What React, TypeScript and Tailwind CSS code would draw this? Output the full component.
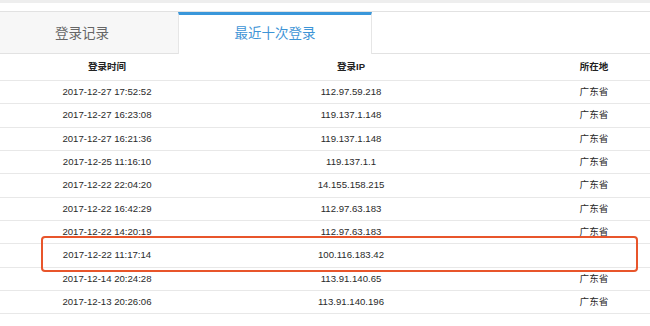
import React from "react";

const rows = [
  { time: "2017-12-27 17:52:52", ip: "112.97.59.218", place: "广东省" },
  { time: "2017-12-27 16:23:08", ip: "119.137.1.148", place: "广东省" },
  { time: "2017-12-27 16:21:36", ip: "119.137.1.148", place: "广东省" },
  { time: "2017-12-25 11:16:10", ip: "119.137.1.1", place: "广东省" },
  { time: "2017-12-22 22:04:20", ip: "14.155.158.215", place: "广东省" },
  { time: "2017-12-22 16:42:29", ip: "112.97.63.183", place: "广东省" },
  { time: "2017-12-22 14:20:19", ip: "112.97.63.183", place: "广东省" },
  { time: "2017-12-22 11:17:14", ip: "100.116.183.42", place: "" },
  { time: "2017-12-14 20:24:28", ip: "113.91.140.65", place: "广东省" },
  { time: "2017-12-13 20:26:06", ip: "113.91.140.196", place: "广东省" },
];

export default function App() {
  return (
    <div
      className="relative w-[650px] h-[326px] overflow-hidden bg-white"
      style={{ fontFamily: '"Liberation Sans", "Noto Sans CJK SC", sans-serif' }}
    >
      <div className="h-[3px] bg-[#eeeeee]" />
      <div className="h-[8px]" />

      {/* tabs */}
      <div className="flex border-t border-[#e2e2e2]">
        <div className="w-[178px] h-[42px] pt-[3px] pr-[14px] flex items-center justify-center bg-[#f7f7f7] border-b border-[#e2e2e2] text-[13.5px] text-[#666666]">
          登录记录
        </div>
        <div className="w-[194px] h-[42px] flex items-center justify-center bg-white border-t-[3px] border-x border-t-[#3a97da] border-x-[#e6e6e6] text-[13.5px] text-[#3d94d6]">
          最近十次登录
        </div>
        <div className="flex-1 h-[42px] border-b border-[#e2e2e2]" />
      </div>

      {/* table */}
      <div className="w-[700px]">
        <div className="flex h-[27px] items-center border-b border-[#e8e8e8] text-[9.5px] font-bold text-[#222222]">
          <div className="w-[214px] text-center">登录时间</div>
          <div className="w-[274px] text-center">登录IP</div>
          <div className="w-[212px] text-center">所在地</div>
        </div>
        {rows.map((r) => (
          <div
            key={r.time}
            className="flex h-[23.33px] items-center border-b border-[#e8e8e8] text-[9.6px] text-[#2a2a2a]"
          >
            <div className="w-[214px] text-center">{r.time}</div>
            <div className="w-[274px] text-center">{r.ip}</div>
            <div className="w-[212px] text-center">{r.place}</div>
          </div>
        ))}
      </div>

      {/* highlight */}
      <div className="absolute left-[41px] top-[236px] w-[597px] h-[36px] rounded-[4px] border-2 border-[#e8552b]" />
    </div>
  );
}
